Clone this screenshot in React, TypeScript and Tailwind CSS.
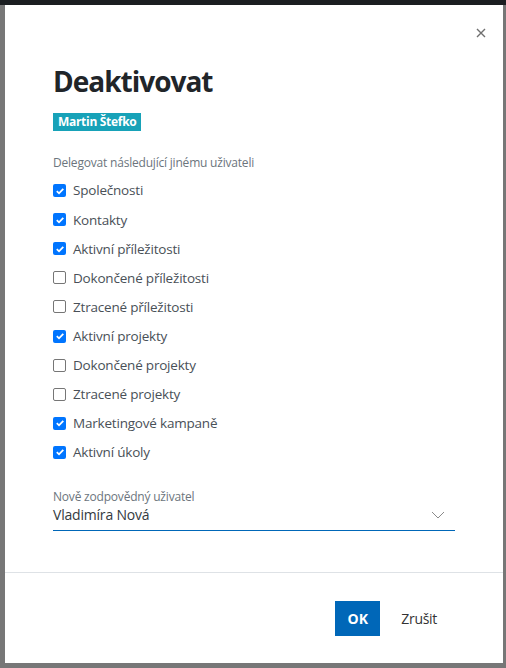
import React from "react";

const items: [string, boolean][] = [
  ["Společnosti", true],
  ["Kontakty", true],
  ["Aktivní příležitosti", true],
  ["Dokončené příležitosti", false],
  ["Ztracené příležitosti", false],
  ["Aktivní projekty", true],
  ["Dokončené projekty", false],
  ["Ztracené projekty", false],
  ["Marketingové kampaně", true],
  ["Aktivní úkoly", true],
];

function Box({ checked }: { checked: boolean }) {
  return checked ? (
    <span className="flex h-[13px] w-[13px] items-center justify-center rounded-[2px] bg-[#0075ff]">
      <svg width="10" height="10" viewBox="0 0 10 10">
        <path d="M1.8 5.2 L4 7.3 L8.3 2.8" fill="none" stroke="white" strokeWidth="1.8" />
      </svg>
    </span>
  ) : (
    <span className="h-[13px] w-[13px] rounded-[2px] border border-[#767676] bg-white" />
  );
}

export default function App() {
  return (
    <div
      className="flex h-[668px] w-[506px] flex-col bg-[#777777]"
      style={{ fontFamily: '"Open Sans", "Noto Sans", sans-serif' }}
    >
      <div className="h-[5px] w-full bg-[#1b1e21]" />
      <div className="flex flex-1 px-[5px] pb-[5px]">
        <div className="flex w-[498px] flex-col bg-white">
          <div className="flex justify-end pr-[17px] pt-[23px]">
            <svg width="10" height="10" viewBox="0 0 10 10">
              <path d="M1 1 L9 9 M9 1 L1 9" stroke="#6f6f6f" strokeWidth="1.4" />
            </svg>
          </div>
          <div className="flex flex-col px-[48px] pt-[25px]">
            <h1 className="text-[28px] font-bold leading-[36px] tracking-[-1px] text-[#212529]">
              Deaktivovat
            </h1>
            <div className="mt-[14px] flex">
              <span className="bg-[#17a2b8] px-[5px] text-[12px] font-bold leading-[18px] tracking-[-0.3px] text-white">
                Martin Štefko
              </span>
            </div>
            <div className="mt-[24px] text-[12px] leading-[16px] tracking-[-0.2px] text-[#6c757d]">
              Delegovat následující jinému uživateli
            </div>
            <div className="mt-[5px] flex flex-col">
              {items.map(([t, c]) => (
                <div key={t} className="flex h-[29.1px] items-center gap-[7px]">
                  <Box checked={c} />
                  <span className="text-[13.5px] tracking-[-0.2px] text-[#495057]">{t}</span>
                </div>
              ))}
            </div>
            <div className="mt-[22px] w-[402px]">
              <div className="text-[12px] leading-[16px] tracking-[-0.2px] text-[#6c757d]">
                Nově zodpovědný uživatel
              </div>
              <div className="flex items-center justify-between border-b border-[#0067b8] pb-[5px] pr-[10px]">
                <span className="text-[14px] leading-[20px] tracking-[-0.2px] text-[#343a40]">Vladimíra Nová</span>
                <svg width="14" height="8" viewBox="0 0 14 8">
                  <path d="M1 1 L7 7 L13 1" fill="none" stroke="#8a8a8a" strokeWidth="1" />
                </svg>
              </div>
            </div>
          </div>
          <div className="mt-[41px] border-t border-[#dee2e6]" />
          <div className="flex items-center justify-end gap-[21px] pr-[66px] pt-[28px]">
            <button className="h-[35px] w-[45px] bg-[#0067b8] text-[14px] font-bold text-white">OK</button>
            <span className="text-[14px] font-medium tracking-[-0.3px] text-[#333333]">Zrušit</span>
          </div>
        </div>
      </div>
    </div>
  );
}
